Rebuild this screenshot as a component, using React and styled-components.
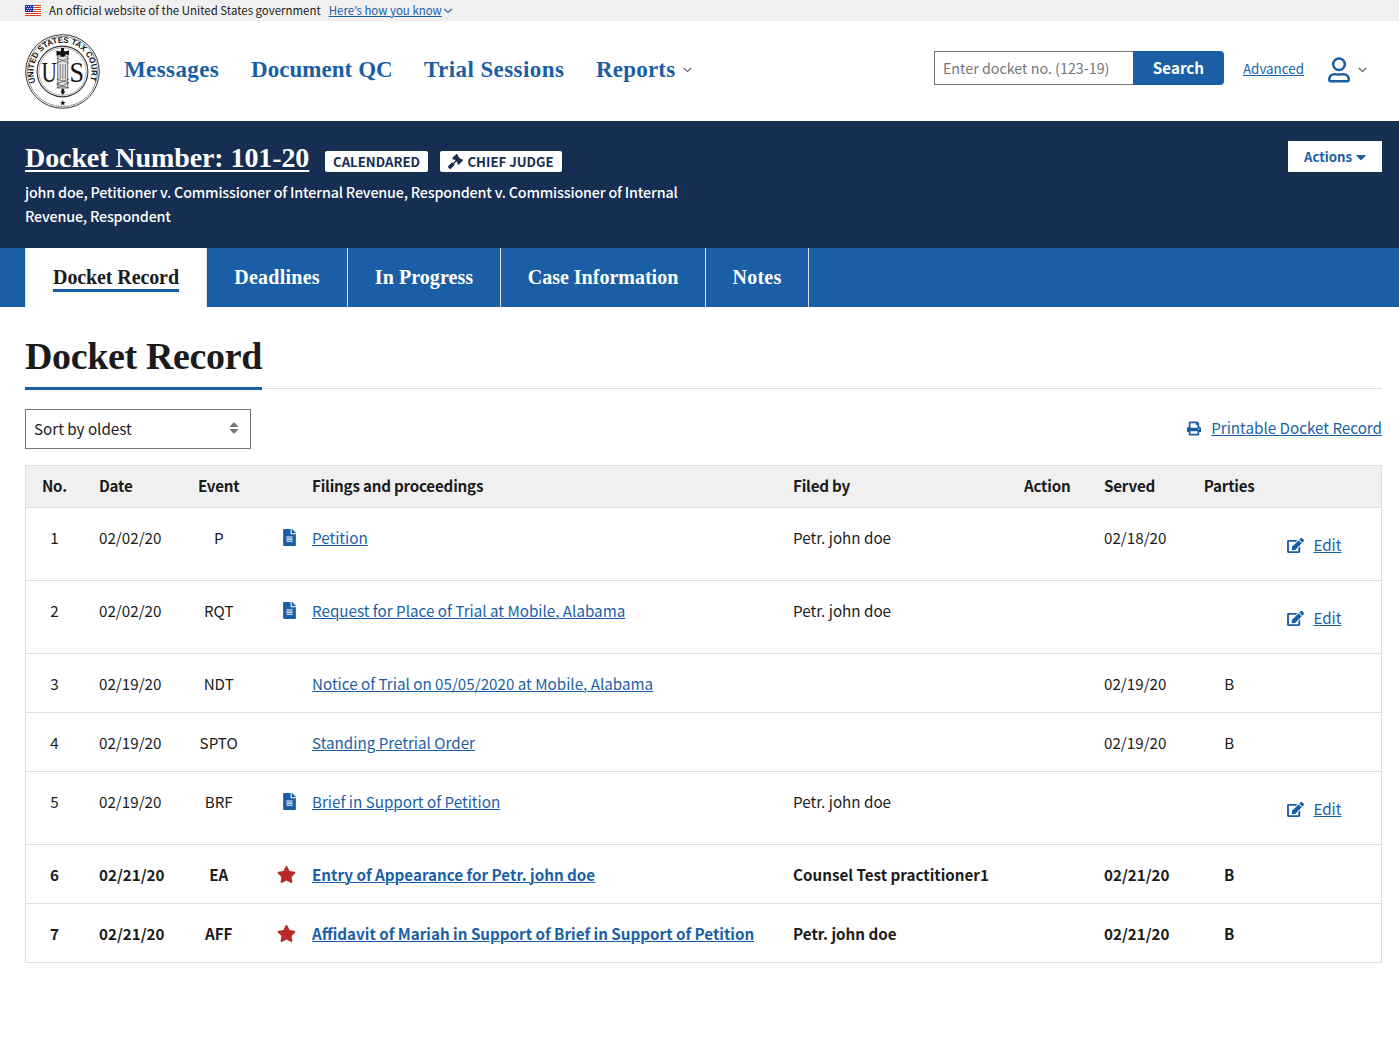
import React from "react";
import styled, { createGlobalStyle, css } from "styled-components";
import { FaFileAlt, FaStar, FaPrint, FaEdit, FaGavel, FaCaretDown } from "react-icons/fa";

const sans = '"Noto Sans CJK KR", "Open Sans", sans-serif';
const serif = '"Source Serif Pro", "Liberation Serif", serif';
const blue = "#1a5fa6";
const navy = "#162e51";
const ink = "#1b1b1b";
const line = "#dcdee0";

const GlobalStyle = createGlobalStyle`
  *, *::before, *::after { box-sizing: border-box; }
  body { margin: 0; background: #fff; color: ${ink}; font-family: ${sans}; font-size: 15.2px; }
  a { color: ${blue}; text-decoration: underline; text-decoration-thickness: 1px; text-underline-offset: 1px; }
`;

const Banner = styled.div`
  display: flex;
  align-items: center;
  height: 21px;
  padding-left: 25px;
  background: #f0f0f0;
  font-size: 11.46px;
  line-height: 21px;
  white-space: nowrap;
`;
const BannerText = styled.span`
  margin: 0 8px;
`;
const BannerLink = styled.a`
  margin-right: 1px;
`;

const Header = styled.header`
  display: flex;
  align-items: center;
  height: 100px;
  padding: 0 32px 0 25px;
`;
const Nav = styled.nav`
  display: flex;
  align-items: center;
  gap: 32px;
  margin: 0 auto 3px 24px;
`;
const NavItem = styled.span`
  width: ${(p) => p.$w}px;
  color: ${blue};
  font: 700 23px/30px ${serif};
  letter-spacing: ${(p) => p.$ls || 0}px;
  white-space: nowrap;
`;
const NavGroup = styled.div`
  display: flex;
  align-items: center;
  gap: 8px;
`;
const Search = styled.form`
  display: flex;
  height: 34px;
  margin-bottom: 6px;
`;
const SearchInput = styled.input`
  width: 199px;
  padding: 0 8px;
  border: 1px solid #71767a;
  border-right: 0;
  border-radius: 0;
  font: 400 14.3px/20px ${sans};
  color: ${ink};
  &::placeholder { color: #757575; opacity: 1; }
`;
const SearchButton = styled.button`
  width: 91px;
  padding: 0 0 3px;
  border: 0;
  border-radius: 0 4px 4px 0;
  background: ${blue};
  color: #fff;
  font: 700 15.2px/20px ${sans};
`;
const Advanced = styled.a`
  margin: 0 24px 6px 19px;
  font-size: 13.4px;
  line-height: 20px;
`;
const Account = styled.div`
  display: flex;
  align-items: center;
  gap: 8px;
  margin-bottom: 3px;
  color: ${blue};
`;

const CaseHeader = styled.section`
  display: flex;
  justify-content: space-between;
  align-items: flex-start;
  height: 127px;
  padding: 20px 17px 0 25px;
  background: ${navy};
  color: #fff;
`;
const TitleRow = styled.div`
  display: flex;
  align-items: center;
  height: 34px;
`;
const DocketNumber = styled.h1`
  width: 284px;
  margin: 0 16px 0 0;
  font: 700 28px/34px ${serif};
  letter-spacing: -0.09px;
  white-space: nowrap;
  text-decoration: underline;
  text-decoration-thickness: 2px;
  text-underline-offset: 3px;
`;
const Badge = styled.span`
  display: flex;
  align-items: center;
  justify-content: center;
  gap: 4px;
  width: ${(p) => p.$w}px;
  height: 21px;
  margin: 7px 12px 0 0;
  border-radius: 2px;
  background: #fff;
  color: ${navy};
  font-size: 13.2px;
  font-weight: 700;
  line-height: 21px;
  white-space: nowrap;
`;
const Caption = styled.p`
  width: 680px;
  margin: 5px 0 0;
  font-size: 14.3px;
  font-weight: 500;
  letter-spacing: -0.17px;
  line-height: 24px;
`;
const Actions = styled.button`
  display: flex;
  align-items: center;
  justify-content: center;
  gap: 4px;
  width: 94px;
  height: 31px;
  padding: 0;
  border: 0;
  background: #fff;
  color: ${blue};
  font: 700 13.2px/19px ${sans};
`;

const Tabs = styled.div`
  display: flex;
  height: 59px;
  padding-left: 25px;
  background: ${blue};
`;
const Tab = styled.div`
  display: flex;
  justify-content: center;
  width: ${(p) => p.$w}px;
  padding-top: 16px;
  border-right: 1px solid ${line};
  color: #fff;
  font: 700 20px/27px ${serif};
  letter-spacing: ${(p) => p.$ls || 0}px;
  white-space: nowrap;
  ${(p) => p.$active && css`
    border-left: 1px solid ${line};
    background: #fff;
    color: ${ink};
  `}
`;
const TabLabel = styled.span`
  height: 28px;
  border-bottom: ${(p) => (p.$active ? `3px solid ${blue}` : "0")};
`;

const Main = styled.main`
  padding: 27px 17px 0 25px;
`;
const Heading = styled.div`
  display: flex;
  height: 56px;
  margin-bottom: 19px;
`;
const HeadingText = styled.h2`
  width: 237px;
  height: 56px;
  margin: 0;
  border-bottom: 3px solid ${blue};
  font: 700 38px/45px ${serif};
  letter-spacing: -0.36px;
  white-space: nowrap;
`;
const HeadingRule = styled.div`
  flex: 1;
  height: 55px;
  border-bottom: 1px solid ${line};
`;
const Controls = styled.div`
  display: flex;
  justify-content: space-between;
  align-items: center;
  height: 40px;
  margin-bottom: 16px;
`;
const Sort = styled.div`
  display: flex;
  justify-content: space-between;
  align-items: center;
  width: 226px;
  height: 40px;
  padding: 0 12px 2px 8px;
  border: 1px solid #71767a;
`;
const IconLink = styled.div`
  display: flex;
  align-items: center;
  gap: ${(p) => p.$gap || 10}px;
  line-height: 24px;
  color: ${blue};
  svg { margin-top: 2px; }
`;
const PrintLink = styled(IconLink)`
  margin-bottom: 4px;
`;

const Table = styled.table`
  width: 1357px;
  table-layout: fixed;
  border-collapse: collapse;
  border: 1px solid ${line};
  line-height: 24px;
`;
const Col = styled.col`
  width: ${(p) => p.$w}px;
`;
const Th = styled.th`
  height: 42px;
  padding: ${(p) => (p.$center ? "0 0 3px .4px" : "0 15px 3px 16.5px")};
  background: #f0f0f0;
  font-weight: 700;
  letter-spacing: -0.22px;
  text-align: ${(p) => (p.$center ? "center" : "left")};
  white-space: nowrap;
`;
const Tr = styled.tr`
  height: ${(p) => (p.$tall ? 73 : 59)}px;
  border-top: 1px solid ${line};
  font-weight: ${(p) => (p.$bold ? 700 : 400)};
`;
const Td = styled.td`
  padding: ${(p) => (p.$edit ? 24 : 17)}px ${(p) => (p.$center ? 0 : 15)}px 0 ${(p) => (p.$center ? 0.4 : 16.5)}px;
  vertical-align: top;
  text-align: ${(p) => (p.$center ? "center" : "left")};
  white-space: nowrap;
`;
const IconTd = styled(Td)`
  padding: 21px 0 0;
  text-align: right;
  line-height: 0;
`;

const sized = css`
  width: ${(p) => p.$w}px;
  height: ${(p) => p.$h}px;
  flex: none;
`;
const FileIcon = styled(FaFileAlt)`${sized} color: ${blue};`;
const StarIcon = styled(FaStar)`${sized} color: #b72a27;`;
const PrintIcon = styled(FaPrint)`${sized}`;
const EditIcon = styled(FaEdit)`${sized}`;
const GavelIcon = styled(FaGavel)`${sized}`;
const CaretIcon = styled(FaCaretDown)`${sized}`;

const Chevron = ({ color = "#565c65", w = 9 }) => (
  <svg width={w} height="6" viewBox="0 0 9 6">
    <path d="M.8 1 4.5 4.6 8.2 1" fill="none" stroke={color} strokeWidth="1.1" />
  </svg>
);

const UserIcon = () => (
  <svg width="22" height="26" viewBox="0 0 22 26">
    <g fill="none" stroke={blue} strokeWidth="2.5">
      <circle cx="11" cy="7.2" r="5.8" />
      <path d="M1.25 22.6C1.25 19.3 3.4 17.2 6.4 17.2 8 17.2 9 17.6 11 17.6S14 17.2 15.6 17.2C18.6 17.2 20.75 19.3 20.75 22.6V23.1A1.1 1.1 0 0 1 19.6 24.2H2.4A1.1 1.1 0 0 1 1.25 23.1Z" />
    </g>
  </svg>
);

const Flag = () => (
  <svg width="16" height="11" viewBox="0 0 16 11">
    <rect width="16" height="11" fill="#fff" />
    {[0, 2, 4, 6, 8, 10].map((y) => (
      <rect key={y} y={y} width="16" height="1" fill="#db3e1f" />
    ))}
    <rect width="8" height="7" fill="#1e33b1" />
    {[1, 3, 5].map((y) => [1, 3, 5].map((x) => (
      <rect key={`${x}-${y}`} x={x + (y === 3 ? 1 : 0)} y={y} width="1" height="1" fill="#dfe3ff" />
    )))}
  </svg>
);

const starPath = "M0-3.4.9-1.1 3.4-1 1.4.5 2.1 3 0 1.6-2.1 3-1.4.5-3.4-1-.9-1.1Z";

const Seal = () => (
  <svg width="75" height="75" viewBox="0 0 75 75">
    <g fill="none" stroke="#333">
      <circle cx="37.5" cy="37.5" r="36.8" strokeWidth="1" />
      <circle cx="37.5" cy="37.5" r="35.1" strokeWidth=".8" stroke="#777" />
      <circle cx="37.5" cy="37.5" r="25.4" strokeWidth="1.1" />
      <circle cx="37.5" cy="37.5" r="23.7" strokeWidth=".6" stroke="#777" />
    </g>
    <defs>
      <path id="sealArc" d="M11.6 50.7A29 29 0 1 1 63.4 50.7" />
    </defs>
    <text fontFamily="Liberation Sans, sans-serif" fontWeight="700" fontSize="8" fill="#111">
      <textPath href="#sealArc" startOffset="2.5">UNITED STATES TAX COURT</textPath>
    </text>
    <g fontFamily="Liberation Serif, serif" fontSize="29" fill="#111">
      <text x="16.4" y="47.6" textLength="15.4" lengthAdjust="spacingAndGlyphs">U</text>
      <text x="44.6" y="47.6" textLength="14.6" lengthAdjust="spacingAndGlyphs">S</text>
    </g>
    <rect x="32.8" y="22" width="10" height="32" fill="#e4e4e4" stroke="#555" strokeWidth=".8" />
    <path d="M35.2 30v15M37.8 30v15M40.4 30v15" stroke="#666" strokeWidth=".8" />
    <path d="M31.6 24l12.4 5M31.6 29l12.4-5M31.6 45l12.4 4M31.6 50l12.4-5M31.6 54l12.4-5M31.6 50l12.4 4" stroke="#555" strokeWidth=".8" />
    <path d="M36 14h3v2.4l1.5 1 3.5-1.2v5l-3-1-2 2.6h-3l-1-2-3.5 1v-5.2l3.5 1 1-1.2Z" fill="#111" />
    <path d="M36.8 55h2v2l1 1-2 2.6-2-2.6 1-1Z" fill="#111" stroke="#111" strokeWidth=".5" />
    <path d={starPath} transform="translate(37.8 69)scale(.85)" fill="#111" />
  </svg>
);

const SortArrows = () => (
  <svg width="8" height="12" viewBox="0 0 8 12">
    <path d="M4 0 8 4.2V5H0v-.8ZM0 7h8v.8L4 12 0 7.8Z" fill="#71767a" />
  </svg>
);

const rows = [
  { no: 1, date: "02/02/20", event: "P", icon: "file", title: "Petition", by: "Petr. john doe", served: "02/18/20", edit: true },
  { no: 2, date: "02/02/20", event: "RQT", icon: "file", title: "Request for Place of Trial at Mobile, Alabama", by: "Petr. john doe", edit: true },
  { no: 3, date: "02/19/20", event: "NDT", title: "Notice of Trial on 05/05/2020 at Mobile, Alabama", served: "02/19/20", parties: "B" },
  { no: 4, date: "02/19/20", event: "SPTO", title: "Standing Pretrial Order", served: "02/19/20", parties: "B" },
  { no: 5, date: "02/19/20", event: "BRF", icon: "file", title: "Brief in Support of Petition", by: "Petr. john doe", edit: true },
  { no: 6, date: "02/21/20", event: "EA", icon: "star", title: "Entry of Appearance for Petr. john doe", by: "Counsel Test practitioner1", served: "02/21/20", parties: "B", bold: true },
  { no: 7, date: "02/21/20", event: "AFF", icon: "star", title: "Affidavit of Mariah in Support of Brief in Support of Petition", by: "Petr. john doe", served: "02/21/20", parties: "B", bold: true },
];

const columns = [57, 95, 82, 36, 481, 231, 80, 100, 83, 111];

export default function App() {
  return (
    <>
      <GlobalStyle />
      <Banner>
        <Flag />
        <BannerText>An official website of the United States government</BannerText>
        <BannerLink>Here’s how you know</BannerLink>
        <Chevron color={blue} w={10} />
      </Banner>
      <Header>
        <Seal />
        <Nav>
          <NavItem $w={95} $ls={0.4}>Messages</NavItem>
          <NavItem $w={141} $ls={0.05}>Document QC</NavItem>
          <NavItem $w={140} $ls={0.42}>Trial Sessions</NavItem>
          <NavGroup>
            <NavItem $w={79} $ls={0.2}>Reports</NavItem>
            <Chevron />
          </NavGroup>
        </Nav>
        <Search>
          <SearchInput placeholder="Enter docket no. (123-19)" />
          <SearchButton type="button">Search</SearchButton>
        </Search>
        <Advanced>Advanced</Advanced>
        <Account>
          <UserIcon />
          <Chevron />
        </Account>
      </Header>
      <CaseHeader>
        <div>
          <TitleRow>
            <DocketNumber>Docket Number: 101-20</DocketNumber>
            <Badge $w={103}>CALENDARED</Badge>
            <Badge $w={122}><GavelIcon $w={15} $h={15} />CHIEF JUDGE</Badge>
          </TitleRow>
          <Caption>
            john doe, Petitioner v. Commissioner of Internal Revenue, Respondent v. Commissioner of Internal Revenue, Respondent
          </Caption>
        </div>
        <Actions>Actions <CaretIcon $w={10} $h={16} /></Actions>
      </CaseHeader>
      <Tabs>
        <Tab $w={182} $active $ls={-0.1}><TabLabel $active>Docket Record</TabLabel></Tab>
        <Tab $w={141} $ls={0.25}><TabLabel>Deadlines</TabLabel></Tab>
        <Tab $w={153} $ls={0.07}><TabLabel>In Progress</TabLabel></Tab>
        <Tab $w={205}><TabLabel>Case Information</TabLabel></Tab>
        <Tab $w={103} $ls={0.2}><TabLabel>Notes</TabLabel></Tab>
      </Tabs>
      <Main>
        <Heading>
          <HeadingText>Docket Record</HeadingText>
          <HeadingRule />
        </Heading>
        <Controls>
          <Sort>Sort by oldest<SortArrows /></Sort>
          <PrintLink><PrintIcon $w={14} $h={15} /><a>Printable Docket Record</a></PrintLink>
        </Controls>
        <Table>
          <colgroup>{columns.map((w, i) => <Col key={i} $w={w} />)}</colgroup>
          <thead>
            <tr>
              <Th $center>No.</Th>
              <Th>Date</Th>
              <Th $center>Event</Th>
              <Th />
              <Th>Filings and proceedings</Th>
              <Th>Filed by</Th>
              <Th>Action</Th>
              <Th>Served</Th>
              <Th $center>Parties</Th>
              <Th />
            </tr>
          </thead>
          <tbody>
            {rows.map((r) => (
              <Tr key={r.no} $tall={r.edit} $bold={r.bold}>
                <Td $center>{r.no}</Td>
                <Td>{r.date}</Td>
                <Td $center>{r.event}</Td>
                <IconTd>
                  {r.icon === "file" && <FileIcon $w={13} $h={17} />}
                  {r.icon === "star" && <StarIcon $w={19} $h={17} />}
                </IconTd>
                <Td><a>{r.title}</a></Td>
                <Td>{r.by}</Td>
                <Td />
                <Td>{r.served}</Td>
                <Td $center>{r.parties}</Td>
                <Td $edit>
                  {r.edit && <IconLink $gap={9.4}><EditIcon $w={17} $h={15} /><a>Edit</a></IconLink>}
                </Td>
              </Tr>
            ))}
          </tbody>
        </Table>
      </Main>
    </>
  );
}
